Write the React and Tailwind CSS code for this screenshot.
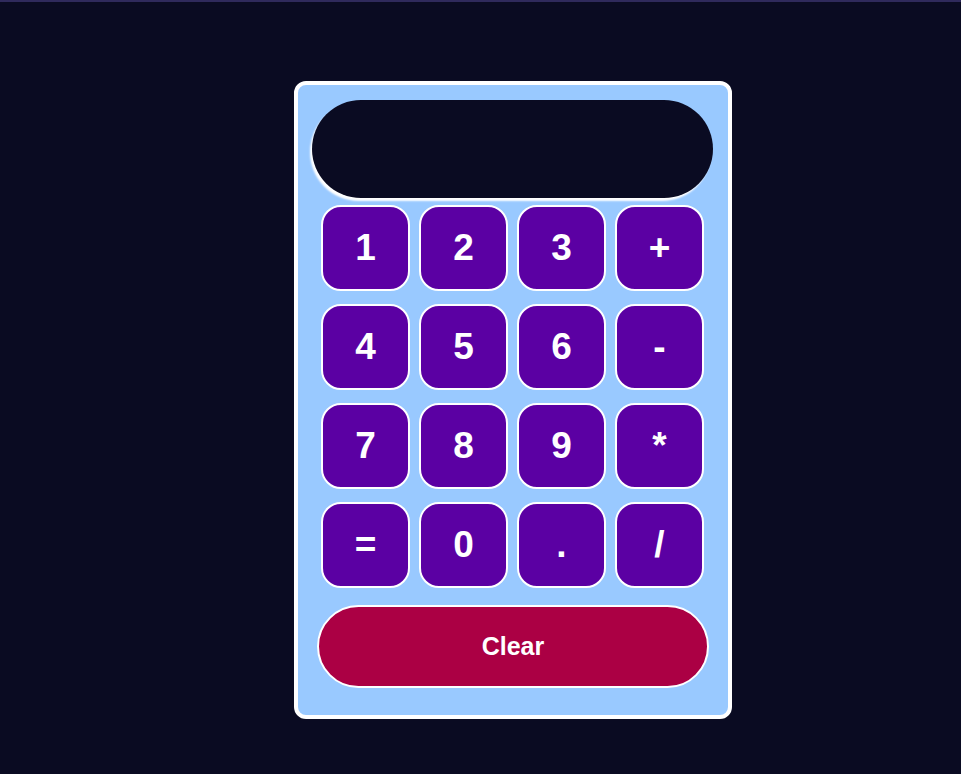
import React from 'react';

const keys = ['1', '2', '3', '+', '4', '5', '6', '-', '7', '8', '9', '*', '=', '0', '.', '/'];

const App = () => {
  return (
    <div className="min-h-[774px] bg-[#0a0b22] font-[family-name:'Liberation_Sans',Arial,sans-serif]">
      <div className="h-[2px] bg-[#2f2a5c]" />
      <div className="ml-[294px] mt-[79px] w-[438px] h-[638px] rounded-[12px] border-4 border-white bg-[#99c9ff] flex flex-col">
        <div className="mt-[15px] ml-[14px] w-[401px] h-[98px] rounded-full bg-[#0a0b22] shadow-[-2px_3px_2px_#ffffff]" />
        <div className="mt-[7px] ml-[23px] grid grid-cols-[repeat(4,89px)] auto-rows-[86px] gap-x-[9px] gap-y-[13px]">
          {keys.map((k) => (
            <button
              key={k}
              className="rounded-[20px] border-2 border-white bg-[#5b00a3] text-white text-[37px] font-bold flex items-center justify-center"
            >
              {k}
            </button>
          ))}
        </div>
        <button className="mt-[17px] ml-[19px] w-[392px] h-[83px] rounded-full border-2 border-white bg-[#ab0044] text-white text-[25px] font-bold">
          Clear
        </button>
      </div>
    </div>
  );
};

export default App;
